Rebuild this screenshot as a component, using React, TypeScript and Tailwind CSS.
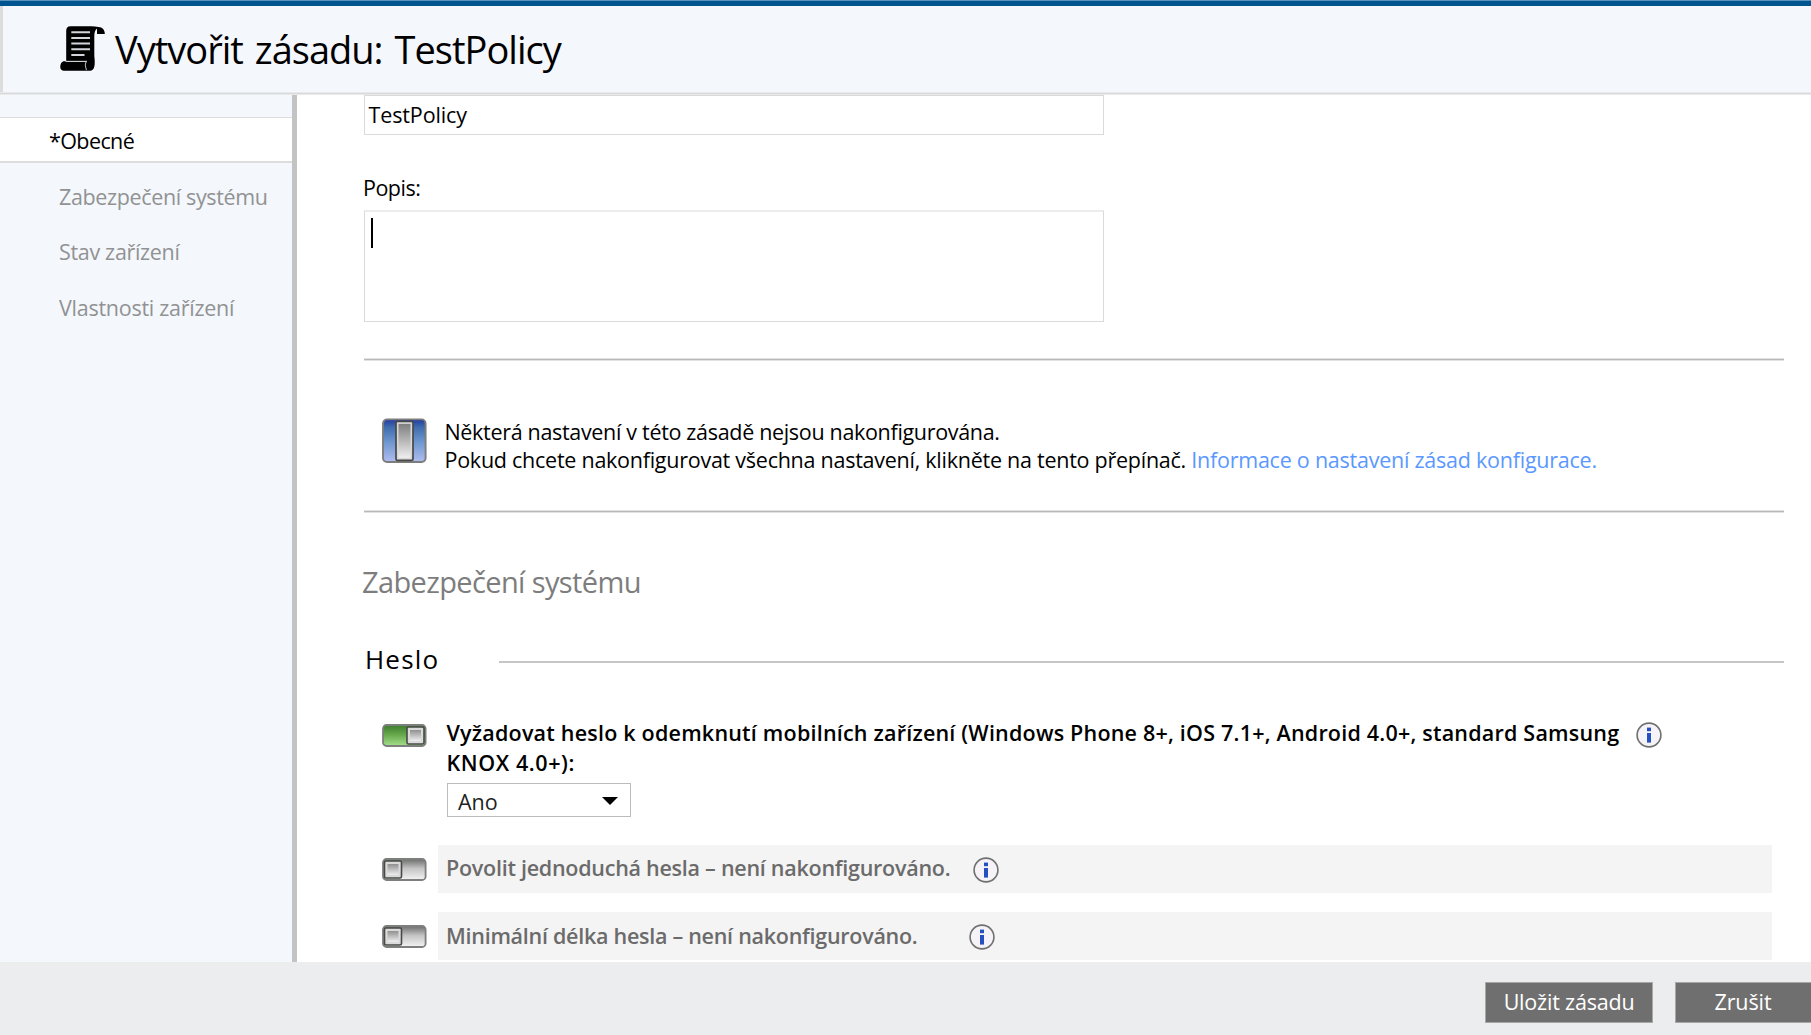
import type { ReactNode } from "react";

function ScrollIcon() {
  return (
    <svg width="46" height="46" viewBox="0 0 46 46" className="block">
      <path
        d="M10.5 0.3H31.5C34 0.3 36 0.6 38.5 0.9C42.5 1.2 44.8 3.5 44.8 8H37V2.5C35.2 4 34.3 6.5 34.3 10V30C35.3 38 35 44.7 30 44.7H4C1.8 44.7 0.3 43.5 0.3 41.5C0.3 38 1.5 35.3 4.5 35.3L6.2 35V5C6.2 2 7.5 0.3 10.5 0.3Z"
        fill="#000"
      />
      <path d="M5.5 35.4H27" stroke="#d8dae0" strokeWidth="1.1" />
      <path d="M26.5 35.4C25 37.5 24.8 40 26.5 44" fill="none" stroke="#a9abb0" strokeWidth="1.1" />
      <path d="M11.3 6.3H30M11.3 12H30M11.3 17.6H30M11.3 23.2H30M11.3 29H24.5" stroke="#d3d5db" strokeWidth="2" />
    </svg>
  );
}

function MasterSwitch() {
  return (
    <svg width="45" height="45" viewBox="0 0 45 45" className="block">
      <defs>
        <linearGradient id="blue" x1="0" y1="0" x2="0" y2="1">
          <stop offset="0" stopColor="#2439a0" />
          <stop offset="0.18" stopColor="#3f6cae" />
          <stop offset="0.55" stopColor="#7098d0" />
          <stop offset="1" stopColor="#b0bdf0" />
        </linearGradient>
        <linearGradient id="steel" x1="0" y1="0" x2="0" y2="1">
          <stop offset="0" stopColor="#7f7f7f" />
          <stop offset="1" stopColor="#efefef" />
        </linearGradient>
      </defs>
      <rect x="1" y="1.4" width="42.6" height="42.6" rx="4" fill="url(#blue)" stroke="#7d7d7d" strokeWidth="1.9" />
      <rect x="14" y="3.4" width="17" height="39" rx="1.5" fill="#d8d8d8" stroke="#484848" strokeWidth="1.7" />
      <rect x="16.5" y="5.9" width="12" height="34" fill="url(#steel)" />
    </svg>
  );
}

function Toggle({ on }: { on?: boolean }) {
  return (
    <svg width="45" height="23" viewBox="0 0 45 23" className="block shrink-0">
      <defs>
        <linearGradient id="green" x1="0" y1="0" x2="0" y2="1">
          <stop offset="0" stopColor="#3b7a2c" />
          <stop offset="0.5" stopColor="#6cac50" />
          <stop offset="1" stopColor="#a5e08d" />
        </linearGradient>
        <linearGradient id="grey" x1="0" y1="0" x2="0" y2="1">
          <stop offset="0" stopColor="#6c6c6c" />
          <stop offset="0.45" stopColor="#c4c4c4" />
          <stop offset="1" stopColor="#f4f4f4" />
        </linearGradient>
        <linearGradient id="knob" x1="0" y1="0" x2="0" y2="1">
          <stop offset="0" stopColor="#909090" />
          <stop offset="1" stopColor="#eeeeee" />
        </linearGradient>
      </defs>
      <rect x="1" y="1" width="42.6" height="21" rx="3.5" fill={on ? "url(#green)" : "url(#grey)"} stroke="#7d7f7c" strokeWidth="1.8" />
      <rect x={on ? 25 : 2.5} y="3" width="17" height="17" rx="1.5" fill="#dadada" stroke="#474a45" strokeWidth="1.6" />
      <rect x={on ? 28 : 5.5} y="6" width="11" height="11" fill="url(#knob)" />
    </svg>
  );
}

function Info() {
  return (
    <svg width="26" height="26" viewBox="0 0 26 26" className="block shrink-0">
      <circle cx="13" cy="13" r="11.9" fill="#f6f3f8" stroke="#707070" strokeWidth="1.6" />
      <rect x="11" y="5.6" width="4" height="3.6" fill="#2450c0" />
      <rect x="11" y="11" width="4" height="9.6" fill="#2450c0" />
    </svg>
  );
}

function Rule() {
  return (
    <div className="mr-[27px]">
      <div className="h-px bg-[#e2e2e2]" />
      <div className="h-px bg-[#b9b9b9]" />
      <div className="h-px bg-[#e2e2e2]" />
    </div>
  );
}

function UnsetRow({ children }: { children: ReactNode }) {
  return (
    <div className="flex items-center pl-[18px]">
      <Toggle />
      <div className="ml-[11px] mr-[39px] flex h-12 flex-1 items-center bg-[#f4f4f4] pl-2 font-semibold leading-[30px] text-[#6b6b6b]">
        {children}
        <div className="mt-[2px]">
          <Info />
        </div>
      </div>
    </div>
  );
}

export default function App() {
  return (
    <div className="flex h-[1035px] w-[1811px] flex-col overflow-hidden whitespace-nowrap bg-white font-['Open_Sans',sans-serif] text-[21.5px] text-black">
      <div className="h-[6px] shrink-0 border-t border-[#5b93bd] bg-[#005591]" />
      <header className="flex h-[86px] shrink-0 border-l-[3px] border-[#dcdcdc] bg-[#f4f7fc] pl-[57px] pt-[20px]">
        <ScrollIcon />
        <h1 className="ml-[9px] text-[38px] leading-[46px] tracking-[-0.98px] [word-spacing:3px]">Vytvořit zásadu: TestPolicy</h1>
      </header>
      <div className="h-[3px] shrink-0 border-y border-[#e8e9eb] bg-[#d9dadc]" />
      <div className="flex h-[867px] shrink-0">
        <nav className="w-[292px] shrink-0 bg-[#f4f7fc] pt-[22px] leading-7">
          <div className="h-[46px] border-b-2 border-t border-[#dddddd] bg-white pl-[49px] pt-[9px] tracking-[-0.6px]">*Obecné</div>
          <div className="mt-[20px] pl-[59px] tracking-[-0.36px] text-[#919293]">Zabezpečení systému</div>
          <div className="mt-[27px] pl-[59px] tracking-[-0.32px] text-[#919293]">Stav zařízení</div>
          <div className="mt-[28px] pl-[59px] tracking-[-0.26px] text-[#919293]">Vlastnosti zařízení</div>
        </nav>
        <div className="w-[5px] shrink-0 bg-[#c3c3c3]" />
        <main className="min-w-0 flex-1 pl-[67px]">
          <div className="h-10 w-[740px] border border-[#dadada] pl-[3.5px] pt-[5px] leading-7 tracking-[-0.12px]">TestPolicy</div>
          <div className="-ml-px mt-[39px] leading-7 tracking-[-0.5px]">Popis:</div>
          <div className="mt-2 h-28 w-[740px] border border-t-2 border-[#dadada] border-t-[#ececec] pl-[6px] pt-[6px]">
            <div className="h-[30px] w-[2px] bg-black" />
          </div>
          <div className="mt-9">
            <Rule />
          </div>
          <section className="flex h-[149px] pl-[18px] pt-[57px] leading-7">
            <MasterSwitch />
            <div className="ml-[17.5px]">
              <p className="tracking-[-0.32px]">Některá nastavení v této zásadě nejsou nakonfigurována.</p>
              <p>
                <span className="tracking-[-0.255px]">Pokud chcete nakonfigurovat všechna nastavení, klikněte na tento přepínač. </span>
                <a className="tracking-[-0.24px] text-[#5a98ff]">Informace o nastavení zásad konfigurace.</a>
              </p>
            </div>
          </section>
          <Rule />
          <h2 className="-ml-[2px] mt-[49px] text-[29px] leading-10 tracking-[-0.62px] text-[#7d7d7d]">Zabezpečení systému</h2>
          <div className="mr-[27px] mt-10 flex">
            <h3 className="w-[135px] pl-px text-[26px] leading-[35px] tracking-[1.2px]">Heslo</h3>
            <div className="mt-[19px] h-[2px] flex-1 bg-[#c6c6c6]" />
          </div>
          <div className="mt-[40px] flex pl-[18px]">
            <div className="pt-[7px]">
              <Toggle on />
            </div>
            <div className="ml-[19.5px]">
              <p className="pt-px font-semibold leading-[30px] tracking-[0.21px]">
                Vyžadovat heslo k odemknutí mobilních zařízení (Windows Phone 8+, iOS 7.1+, Android 4.0+, standard Samsung
                <br />
                <span className="tracking-[0.6px]">KNOX 4.0+):</span>
              </p>
              <div className="ml-[0.5px] mt-[5px] flex h-[34px] w-[184px] items-center justify-between border border-[#bcbcbc] pl-[10px] pr-[12px]">
                <span className="pt-[3px] leading-7 text-[#222222]">Ano</span>
                <svg width="16" height="8" viewBox="0 0 16 8" className="mt-px">
                  <path d="M0 0H16L8 8Z" fill="#000" />
                </svg>
              </div>
            </div>
            <div className="ml-[17px] pt-[5px]">
              <Info />
            </div>
          </div>
          <div className="mt-7 flex flex-col gap-[19px]">
            <UnsetRow>
              <span className="mr-[23px] pb-[3px] tracking-[-0.26px]">Povolit jednoduchá hesla – není nakonfigurováno.</span>
            </UnsetRow>
            <UnsetRow>
              <span className="mr-[51.5px] tracking-[-0.27px]">Minimální délka hesla – není nakonfigurováno.</span>
            </UnsetRow>
          </div>
        </main>
      </div>
      <footer className="flex flex-1 justify-end gap-[22px] bg-[#ecedef] pt-5 text-white">
        <button className="h-[41px] w-[168px] border border-[#a8a8a8] bg-[#6f6f6f] tracking-[-0.2px]">Uložit zásadu</button>
        <button className="h-[41px] w-[136px] border border-r-0 border-[#a8a8a8] bg-[#6f6f6f] pr-px tracking-[-0.1px]">Zrušit</button>
      </footer>
    </div>
  );
}
